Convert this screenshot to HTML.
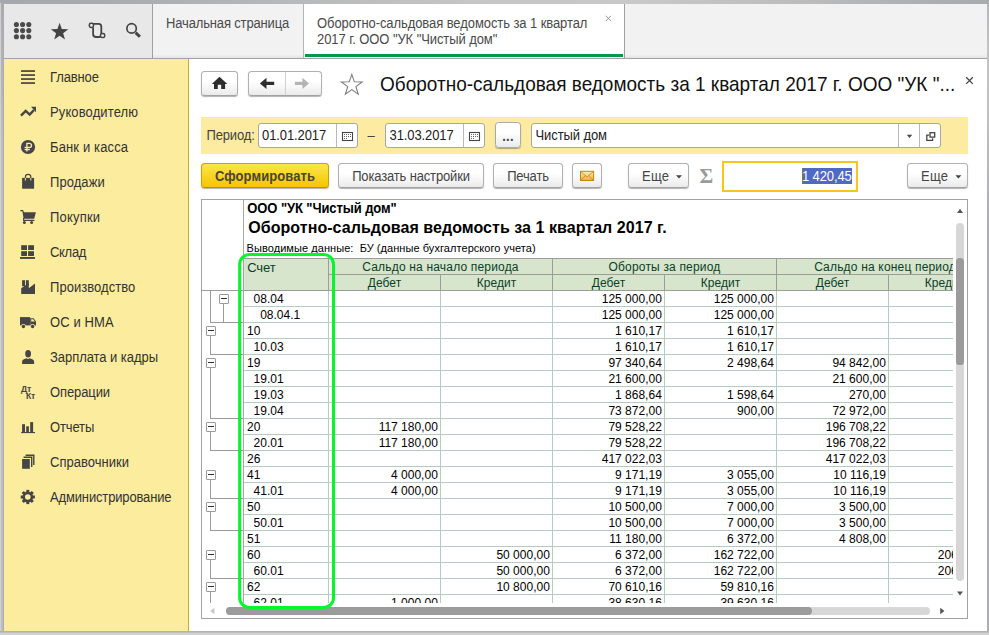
<!DOCTYPE html>
<html lang="ru">
<head>
<meta charset="utf-8">
<title>Оборотно-сальдовая ведомость</title>
<style>
*{box-sizing:border-box;margin:0;padding:0}
html,body{width:989px;height:635px;overflow:hidden}
body{position:relative;background:#a9abae;font-family:"Liberation Sans",sans-serif;font-size:13px;color:#333;letter-spacing:-0.15px}
.abs{position:absolute}
#frameT{left:0;top:0;width:989px;height:4px;background:linear-gradient(90deg,#a6a8ab 0,#a9abad 110px,#b8b9ba 300px,#c6c6c6 480px,#c8c8c8 640px,#bcbcbd 800px,#acaeb0 930px,#a9abad 989px)}
#frameL{left:0;top:3px;width:4px;height:632px;background:linear-gradient(90deg,#d0d0d0 0,#d0d0d0 1px,transparent 1px,transparent 3px,#ababb2 3px),linear-gradient(#a9abae 0,#b2b3b5 60px,#bebebe 140px)}
#frameR{left:987px;top:4px;width:2px;height:631px;background:linear-gradient(#b4b5b7 0,#c2c2c3 40px,#c0c0c1 110px,#abadaf 220px)}
#frameB{left:0;top:631px;width:989px;height:4px;background:linear-gradient(#b2b2b6 0,#b2b2b6 1px,#bebebe 1px,#bebebe 2px,#d0d0d0 2px)}
#win{left:4px;top:4px;width:983px;height:627px;background:#fff;overflow:hidden}
/* top bar */
#topbar{left:0;top:0;width:983px;height:54px;background:#f2f2f2}
#topline{left:0;top:54px;width:983px;height:1px;background:#a3a3a3}
#tools{left:0;top:0;width:148px;height:54px;background:#e8e8e8}
#toolsep{left:148px;top:0;width:1px;height:54px;background:#a0a0a0}
#tab1{left:149px;top:0;width:150px;height:54px;background:linear-gradient(#f2f2f2 0,#f2f2f2 50px,#e4e4e4 54px)}
#tab1sep{left:299px;top:0;width:1px;height:54px;background:#b4b4b4}
#tab2{left:300px;top:0;width:320px;height:54px;background:#fff}
#tab2sep{left:620px;top:0;width:1px;height:54px;background:#a0a0a0}
#tabrest{left:621px;top:0;width:362px;height:54px;background:linear-gradient(#f2f2f2 0,#f2f2f2 50px,#e4e4e4 54px)}
#tab2line{left:301px;top:50px;width:318px;height:3px;background:#039a45}
.tabtxt{color:#4a4a4a;white-space:pre;line-height:16px}
/* sidebar */
#side{left:0;top:55px;width:184px;height:572px;background:#fbec9e}
#sideb{left:184px;top:55px;width:1px;height:572px;background:#c9aa2a}
.nav{position:absolute;left:46px;white-space:pre;color:#333;line-height:16px;letter-spacing:-0.12px}
.ico{position:absolute}
/* main */
.btn{position:absolute;border:1px solid #b0b0b0;border-bottom-color:#a2a2a2;border-radius:3.5px;background:linear-gradient(#fff 0,#fff 40%,#ebebeb 100%);box-shadow:0 1px 1px rgba(0,0,0,.3);color:#444;white-space:pre;text-align:center}
.inp{position:absolute;border:1px solid #a4a7ad;border-radius:3px;background:#fff}
.ybtn{background:linear-gradient(#fde648,#f4c600);border-color:#c9a30a;border-bottom-color:#b8930a;color:#4a4632}
.lbl{white-space:pre;line-height:16px;color:#444}
.fld{white-space:pre;line-height:16px;color:#222;letter-spacing:-0.1px}
.ht{font-size:12px;line-height:16px;color:#0b3d2a;text-align:center;white-space:pre}
.ct{font-size:12px;line-height:16px;color:#000;white-space:pre;letter-spacing:0}
.bt{display:inline-block;line-height:16px;margin-top:4.6px;transform:scaleY(1.06);transform-origin:0 12.3px}
.nav,.tabtxt,.lbl,.fld{transform:scaleY(1.06);transform-origin:0 12.3px}
</style>
</head>
<body>
<div id="frameT" class="abs"></div>
<div id="frameL" class="abs"></div>
<div id="frameR" class="abs"></div>
<div id="frameB" class="abs"></div>
<div id="win" class="abs">
  <div id="topbar" class="abs"></div>
  <div id="tools" class="abs"></div>
  <div id="toolsep" class="abs"></div>
  <div id="tab1" class="abs"></div>
  <div id="tab1sep" class="abs"></div>
  <div id="tab2" class="abs"></div>
  <div id="tab2sep" class="abs"></div>
  <div id="tabrest" class="abs"></div>
  <div id="tab2line" class="abs"></div>
  <div id="topline" class="abs"></div>
  <div class="abs tabtxt" style="left:162px;top:12px">Начальная страница</div>
  <div class="abs tabtxt" style="left:313px;top:12px;letter-spacing:-0.08px">Оборотно-сальдовая ведомость за 1 квартал</div>
  <div class="abs tabtxt" style="left:313px;top:28px;letter-spacing:-0.08px">2017 г. ООО "УК "Чистый дом"</div>
  <svg class="abs" style="left:600px;top:10px" width="10" height="10" viewBox="0 0 10 10"><path d="M1.8 1.8 L7 7 M7 1.8 L1.8 7" stroke="#8a8a8a" stroke-width="0.9" fill="none"/></svg>

  <div id="side" class="abs"></div>
  <div id="sideb" class="abs"></div>
  <!--SIDENAV_START-->
  <svg class="abs" style="left:0;top:0" width="184" height="627" viewBox="4 4 184 627">
  <g fill="#4a4a4a">
  <circle cx="16.4" cy="24.5" r="2.55"/>
  <circle cx="22.6" cy="24.5" r="2.55"/>
  <circle cx="28.8" cy="24.5" r="2.55"/>
  <circle cx="16.4" cy="30.6" r="2.55"/>
  <circle cx="22.6" cy="30.6" r="2.55"/>
  <circle cx="28.8" cy="30.6" r="2.55"/>
  <circle cx="16.4" cy="36.7" r="2.55"/>
  <circle cx="22.6" cy="36.7" r="2.55"/>
  <circle cx="28.8" cy="36.7" r="2.55"/>
  </g>
  <polygon fill="#444" points="59.60,22.80 61.77,29.01 68.35,29.16 63.12,33.14 65.01,39.44 59.60,35.70 54.19,39.44 56.08,33.14 50.85,29.16 57.43,29.01"/>
  <path d="M92 23.8 H98.6 Q101.3 23.8 101.3 26.6 V33.4 M93.1 27.2 V34 Q93.1 37 96 37 H100.4" fill="none" stroke="#444" stroke-width="1.8"/>
  <rect x="89.3" y="23.3" width="4.2" height="4.2" rx="1.7" fill="#e8e8e8" stroke="#444" stroke-width="1.5"/>
  <rect x="100.5" y="33.4" width="4.2" height="4.2" rx="1.7" fill="#e8e8e8" stroke="#444" stroke-width="1.5"/>
  <circle cx="131.6" cy="28.4" r="4.7" fill="none" stroke="#444" stroke-width="1.7"/>
  <path d="M135.6 32.6 L139.9 36.8" stroke="#444" stroke-width="3" stroke-linecap="butt"/>
  <rect x="21" y="70.2" width="14" height="1.7" fill="#454545"/>
  <rect x="21" y="74.2" width="14" height="1.7" fill="#454545"/>
  <rect x="21" y="78.2" width="14" height="1.7" fill="#454545"/>
  <rect x="21" y="82.2" width="14" height="1.7" fill="#454545"/>
  <path d="M21 115.6 L25.7 110.9 L29.7 114.6 L34 110" fill="none" stroke="#454545" stroke-width="2.4" stroke-linejoin="miter"/>
  <path d="M31 106.8 H36 V112.2 Z" fill="#454545"/>
  <circle cx="28" cy="147" r="7.1" fill="#454545"/>
  <path d="M26.9 151.6 V143.4 H29.2 Q31.5 143.4 31.5 145.4 Q31.5 147.4 29.2 147.4 H24.6 M24.6 149.5 H29.8" fill="none" stroke="#fbec9e" stroke-width="1.35"/>
  <rect x="22.1" y="177.9" width="12" height="10.8" fill="#454545"/>
  <path d="M25.4 178 V177 Q25.4 174.4 28.1 174.4 Q30.8 174.4 30.8 177 V178" fill="none" stroke="#454545" stroke-width="1.2"/>
  <path d="M25.4 178 V180.4 M30.8 178 V180.4" fill="none" stroke="#e8d98f" stroke-width="1.1"/>
  <path d="M20.3 210.6 H22.6 L23.6 213" fill="none" stroke="#454545" stroke-width="1.2"/>
  <path d="M22.6 212.2 H35.9 L34.2 218.8 H23.6 Z" fill="#454545"/>
  <path d="M23.6 218 V220.4 H34.4" fill="none" stroke="#454545" stroke-width="1.1"/>
  <circle cx="24.4" cy="222.4" r="1.5" fill="#454545"/><circle cx="31.6" cy="222.4" r="1.5" fill="#454545"/>
  <rect x="21.2" y="245.2" width="5.8" height="4.8" fill="#454545"/><rect x="28.1" y="245.2" width="5.9" height="4.8" fill="#454545"/>
  <rect x="21.2" y="251.2" width="5.8" height="4.8" fill="#454545"/><rect x="28.1" y="251.2" width="5.9" height="4.8" fill="#454545"/>
  <rect x="20" y="257" width="15" height="1.9" fill="#454545"/>
  <rect x="22.1" y="280.2" width="2.9" height="6" fill="#454545"/><rect x="25.9" y="280.2" width="2.9" height="5" fill="#454545"/>
  <path d="M21.2 294 V288.2 L28.8 283 V288.2 L35 283.4 V294 Z" fill="#454545"/>
  <rect x="20" y="317.1" width="10.2" height="8.3" fill="#454545"/>
  <path d="M30.2 318.3 H33.6 L36 321.4 V325.4 H30.2 Z" fill="#454545"/>
  <path d="M31.2 319.3 H33.2 L34.9 321.6 H31.2 Z" fill="#fbec9e"/>
  <circle cx="23.4" cy="326.4" r="2.3" fill="#fbec9e"/><circle cx="32.6" cy="326.4" r="2.3" fill="#fbec9e"/>
  <circle cx="23.4" cy="326.5" r="1.7" fill="#454545"/><circle cx="32.6" cy="326.5" r="1.7" fill="#454545"/>
  <ellipse cx="28.1" cy="353.7" rx="2.9" ry="3.7" fill="#454545"/>
  <path d="M22.1 363.9 V361.4 Q22.1 359.6 24.4 359 L26.6 358.2 Q28.1 359.6 29.6 358.2 L31.8 359 Q34.1 359.6 34.1 361.4 V363.9 Z" fill="#454545"/>
  <rect x="22.1" y="424.2" width="2.9" height="8" fill="#454545"/><rect x="26.2" y="426.3" width="2.7" height="6" fill="#454545"/><rect x="30.2" y="422.1" width="2.9" height="10" fill="#454545"/>
  <rect x="21.2" y="432" width="13.8" height="1.1" fill="#454545"/>
  <rect x="22.1" y="459" width="7.7" height="9.8" fill="#454545"/>
  <path d="M23.6 457.2 H31.7 V467" fill="none" stroke="#454545" stroke-width="1.4"/>
  <path d="M25.6 455.3 H33.8 V465" fill="none" stroke="#454545" stroke-width="1.4"/>
  <rect x="26.30" y="489.90" width="3" height="3.2" transform="rotate(0 27.8 497.0)" fill="#454545"/><rect x="26.30" y="489.90" width="3" height="3.2" transform="rotate(45 27.8 497.0)" fill="#454545"/><rect x="26.30" y="489.90" width="3" height="3.2" transform="rotate(90 27.8 497.0)" fill="#454545"/><rect x="26.30" y="489.90" width="3" height="3.2" transform="rotate(135 27.8 497.0)" fill="#454545"/><rect x="26.30" y="489.90" width="3" height="3.2" transform="rotate(180 27.8 497.0)" fill="#454545"/><rect x="26.30" y="489.90" width="3" height="3.2" transform="rotate(225 27.8 497.0)" fill="#454545"/><rect x="26.30" y="489.90" width="3" height="3.2" transform="rotate(270 27.8 497.0)" fill="#454545"/><rect x="26.30" y="489.90" width="3" height="3.2" transform="rotate(315 27.8 497.0)" fill="#454545"/>
  <circle cx="27.8" cy="497.0" r="4.1" fill="none" stroke="#454545" stroke-width="2.6"/>
  </svg>
  <div class="nav" style="top:66px;letter-spacing:-0.13px">Главное</div>
  <div class="nav" style="top:101px;letter-spacing:0.12px">Руководителю</div>
  <div class="nav" style="top:136px;letter-spacing:0.14px">Банк и касса</div>
  <div class="nav" style="top:171px;letter-spacing:0.06px">Продажи</div>
  <div class="nav" style="top:206px;letter-spacing:0.2px">Покупки</div>
  <div class="nav" style="top:241px;letter-spacing:-0.3px">Склад</div>
  <div class="nav" style="top:276px;letter-spacing:0.05px">Производство</div>
  <div class="nav" style="top:311px;letter-spacing:0.11px">ОС и НМА</div>
  <div class="nav" style="top:346px;letter-spacing:-0.05px">Зарплата и кадры</div>
  <div class="nav" style="top:381px;letter-spacing:-0.11px">Операции</div>
  <div class="nav" style="top:416px;letter-spacing:-0.14px">Отчеты</div>
  <div class="nav" style="top:451px;letter-spacing:0.02px">Справочники</div>
  <div class="nav" style="top:486px;letter-spacing:-0.15px">Администрирование</div>
  <div class="abs" style="left:17px;top:380.5px;font-size:8.6px;line-height:8px;font-weight:bold;color:#454545;letter-spacing:-0.2px">Дт</div>
  <div class="abs" style="left:22px;top:388px;font-size:8.6px;line-height:8px;font-weight:bold;color:#454545;letter-spacing:-0.2px">Кт</div>
  <!--SIDENAV_END-->
  <!--MAIN_START-->
  <div class="btn" style="left:197px;top:67px;width:37px;height:25px;"></div>
  <div class="btn" style="left:244px;top:67px;width:74px;height:25px;"></div>
  <div class="abs" style="left:281px;top:68px;width:1px;height:23px;background:#d0d0d0"></div>
  <svg class="abs" style="left:185px;top:55px" width="798" height="140" viewBox="189 59 798 140">
  <path d="M219.5 76.7 L211.8 83.9 H214 V88.9 H217.8 V84.7 H221.2 V88.9 H225.1 V83.9 H227.3 Z" fill="#2d2d2d"/>
  <path d="M266.5 77.8 L259.9 83.4 L266.5 89 V85.1 H274.2 V81.8 H266.5 Z" fill="#2d2d2d"/>
  <path d="M302.4 77.8 L309 83.4 L302.4 89 V85.1 H294.9 V81.8 H302.4 Z" fill="#b4b4b4"/>
  <polygon fill="#fff" stroke="#7c7c7c" stroke-width="1.1" stroke-linejoin="miter" points="351.80,74.40 354.33,81.82 362.17,81.93 355.89,86.63 358.21,94.12 351.80,89.60 345.39,94.12 347.71,86.63 341.43,81.93 349.27,81.82"/>
  </svg>
  <div class="abs" style="left:376px;top:69px;font-size:19px;line-height:24px;color:#111;white-space:pre;letter-spacing:0;transform:scaleY(1.04);transform-origin:0 18.5px">Оборотно-сальдовая ведомость за 1 квартал 2017 г. ООО "УК "...</div>
  <svg class="abs" style="left:960px;top:71px" width="12" height="12" viewBox="964 75 12 12"><path d="M966.2 77.3 L972.8 83.9 M972.8 77.3 L966.2 83.9" stroke="#454545" stroke-width="1.3" fill="none"/></svg>
  <div class="abs" style="left:197px;top:113px;width:767px;height:37px;background:#fceba0"></div>
  <div class="abs lbl" style="left:202.5px;top:124px">Период:</div>
  <div class="inp" style="left:254px;top:119px;width:99.5px;height:25px;"></div>
  <div class="abs" style="left:332px;top:120px;width:1px;height:23px;background:#b6b8bd"></div>
  <div class="abs fld" style="left:258px;top:124px">01.01.2017</div>
  <div class="abs lbl" style="left:363.5px;top:124px">–</div>
  <div class="inp" style="left:381px;top:119px;width:100px;height:25px;"></div>
  <div class="abs" style="left:459px;top:120px;width:1px;height:23px;background:#b6b8bd"></div>
  <div class="abs fld" style="left:385.5px;top:124px">31.03.2017</div>
  <div class="btn" style="left:491px;top:118px;width:26px;height:26px;font-weight:bold;color:#444;padding-top:1px;letter-spacing:0.25px;border-color:#a9a9ae"><span class="bt">...</span></div>
  <div class="inp" style="left:527px;top:119px;width:409.5px;height:25px;"></div>
  <div class="abs" style="left:894px;top:120px;width:1px;height:23px;background:#b6b8bd"></div>
  <div class="abs" style="left:915px;top:120px;width:1px;height:23px;background:#b6b8bd"></div>
  <div class="abs fld" style="left:531.5px;top:124px">Чистый дом</div>
  <div class="btn ybtn" style="left:197px;top:159px;width:128px;height:25px;font-weight:bold;letter-spacing:0.08px"><span class="bt">Сформировать</span></div>
  <div class="btn" style="left:334px;top:159px;width:146px;height:25px;"><span class="bt">Показать настройки</span></div>
  <div class="btn" style="left:489px;top:159px;width:70px;height:25px;"><span class="bt">Печать</span></div>
  <div class="btn" style="left:568px;top:159px;width:30px;height:25px;"></div>
  <div class="btn" style="left:624px;top:159px;width:61px;height:25px;text-align:left;padding-left:13px;letter-spacing:0.25px"><span class="bt">Еще</span></div>
  <div class="btn" style="left:903px;top:159px;width:61px;height:25px;text-align:left;padding-left:13px;letter-spacing:0.25px"><span class="bt">Еще</span></div>
  <div class="abs" style="left:695.5px;top:160px;font-family:'Liberation Serif',serif;font-size:21px;line-height:24px;color:#9a9a9a;font-weight:bold;letter-spacing:0">Σ</div>
  <div class="abs" style="left:718px;top:157px;width:136px;height:31px;border:2px solid #f8c41f;background:#fff"></div>
  <div class="abs" style="left:798px;top:164px;width:50px;height:16px;background:#4f69c6"></div>
  <div class="abs" style="left:798px;top:164px;width:1px;height:16px;background:#8a7a30"></div>
  <div class="abs" style="left:798px;top:164.5px;width:49.4px;text-align:right;line-height:16px;color:#fff;white-space:pre;letter-spacing:-0.12px;transform:scaleY(1.06);transform-origin:0 12.3px">1 420,45</div>
  <svg class="abs" style="left:185px;top:55px" width="798" height="140" viewBox="189 59 798 140">
  <rect x="342.5" y="132.5" width="10" height="8" fill="#fff" stroke="#444" stroke-width="1.1"/><rect x="344.1" y="134.0" width="0.9" height="0.9" fill="#444"/><rect x="346.1" y="134.0" width="0.9" height="0.9" fill="#444"/><rect x="348.1" y="134.0" width="0.9" height="0.9" fill="#444"/><rect x="350.1" y="134.0" width="0.9" height="0.9" fill="#444"/><rect x="344.1" y="136.0" width="0.9" height="0.9" fill="#444"/><rect x="346.1" y="136.0" width="0.9" height="0.9" fill="#444"/><rect x="348.1" y="136.0" width="0.9" height="0.9" fill="#444"/><rect x="350.1" y="136.0" width="0.9" height="0.9" fill="#444"/><rect x="344.1" y="138.0" width="0.9" height="0.9" fill="#444"/><rect x="346.1" y="138.0" width="0.9" height="0.9" fill="#444"/>
  <rect x="469.5" y="132.5" width="10" height="8" fill="#fff" stroke="#444" stroke-width="1.1"/><rect x="471.1" y="134.0" width="0.9" height="0.9" fill="#444"/><rect x="473.1" y="134.0" width="0.9" height="0.9" fill="#444"/><rect x="475.1" y="134.0" width="0.9" height="0.9" fill="#444"/><rect x="477.1" y="134.0" width="0.9" height="0.9" fill="#444"/><rect x="471.1" y="136.0" width="0.9" height="0.9" fill="#444"/><rect x="473.1" y="136.0" width="0.9" height="0.9" fill="#444"/><rect x="475.1" y="136.0" width="0.9" height="0.9" fill="#444"/><rect x="477.1" y="136.0" width="0.9" height="0.9" fill="#444"/><rect x="471.1" y="138.0" width="0.9" height="0.9" fill="#444"/><rect x="473.1" y="138.0" width="0.9" height="0.9" fill="#444"/>
  <path d="M906.8 134.8 h5.4 l-2.7 3.2 z" fill="#444"/>
  <path d="M929 135.2 H926.8 V140.3 H932.6 V138.3" fill="none" stroke="#444" stroke-width="1.3"/><rect x="930" y="132.7" width="4.7" height="4.4" fill="#fff" stroke="#444" stroke-width="1.3"/>
  <path d="M676 175.2 h6 l-3 3.4 z" fill="#444"/>
  <path d="M955.4 175.2 h6 l-3 3.4 z" fill="#444"/>
  <defs><linearGradient id="mg" x1="0" y1="0" x2="0" y2="1"><stop offset="0" stop-color="#fdeeb5"/><stop offset="1" stop-color="#e9b040"/></linearGradient></defs>
  <rect x="580.5" y="171.3" width="13.1" height="9.2" fill="url(#mg)" stroke="#c6850f" stroke-width="1"/><path d="M581 171.8 L587 177 L593.1 171.8 M581 180 L585.4 175.6 M593.1 180 L588.7 175.6" fill="none" stroke="#c6850f" stroke-width="0.8"/>
  </svg>
  <!--REPORT_START-->
  <div id="rep" class="abs" style="left:197px;top:195px;width:767px;height:420px;border:1px solid #a2a2a2;background:#fff;overflow:hidden"></div>
  <div id="sheet" class="abs" style="left:198px;top:196px;width:750.5px;height:403px;overflow:hidden">
  <div class="abs" style="left:45.3px;top:0.6px;font-size:13px;font-weight:bold;line-height:16px;color:#000;white-space:pre;letter-spacing:-0.09px;transform:scaleY(1.07);transform-origin:0 12.3px">ООО "УК "Чистый дом"</div>
    <div class="abs" style="left:46.3px;top:18px;font-size:16px;font-weight:bold;line-height:20px;color:#000;white-space:pre;letter-spacing:0.05px">Оборотно-сальдовая ведомость за 1 квартал 2017 г.</div>
    <div class="abs" style="left:44.6px;top:41px;font-size:11px;line-height:14px;color:#000;white-space:pre;letter-spacing:0.06px">Выводимые данные:  БУ (данные бухгалтерского учета)</div>
    <div class="abs" style="left:42px;top:58px;width:757px;height:33px;background:#d6e5cb"></div>
    <div class="abs" style="left:0;top:58px;width:799px;height:1px;background:#9c9c9c;left:42px"></div>
    <div class="abs" style="left:126px;top:74px;width:672px;height:1px;background:#9c9c9c"></div>
    <div class="abs" style="left:0;top:90px;width:799px;height:1px;background:#9c9c9c"></div>
    <div class="abs" style="left:126px;top:58px;width:1px;height:33px;background:#9c9c9c"></div>
    <div class="abs" style="left:350px;top:58px;width:1px;height:33px;background:#9c9c9c"></div>
    <div class="abs" style="left:574px;top:58px;width:1px;height:33px;background:#9c9c9c"></div>
    <div class="abs" style="left:798px;top:58px;width:1px;height:33px;background:#9c9c9c"></div>
    <div class="abs" style="left:238px;top:74px;width:1px;height:17px;background:#9c9c9c"></div>
    <div class="abs" style="left:462px;top:74px;width:1px;height:17px;background:#9c9c9c"></div>
    <div class="abs" style="left:686px;top:74px;width:1px;height:17px;background:#9c9c9c"></div>
    <div class="abs" style="left:42px;top:106px;width:756px;height:1px;background:#b3cdc3"></div>
    <div class="abs" style="left:42px;top:122px;width:756px;height:1px;background:#b3cdc3"></div>
    <div class="abs" style="left:42px;top:138px;width:756px;height:1px;background:#b3cdc3"></div>
    <div class="abs" style="left:42px;top:154px;width:756px;height:1px;background:#b3cdc3"></div>
    <div class="abs" style="left:42px;top:170px;width:756px;height:1px;background:#b3cdc3"></div>
    <div class="abs" style="left:42px;top:186px;width:756px;height:1px;background:#b3cdc3"></div>
    <div class="abs" style="left:42px;top:202px;width:756px;height:1px;background:#b3cdc3"></div>
    <div class="abs" style="left:42px;top:218px;width:756px;height:1px;background:#b3cdc3"></div>
    <div class="abs" style="left:42px;top:234px;width:756px;height:1px;background:#b3cdc3"></div>
    <div class="abs" style="left:42px;top:250px;width:756px;height:1px;background:#b3cdc3"></div>
    <div class="abs" style="left:42px;top:266px;width:756px;height:1px;background:#b3cdc3"></div>
    <div class="abs" style="left:42px;top:282px;width:756px;height:1px;background:#b3cdc3"></div>
    <div class="abs" style="left:42px;top:298px;width:756px;height:1px;background:#b3cdc3"></div>
    <div class="abs" style="left:42px;top:314px;width:756px;height:1px;background:#b3cdc3"></div>
    <div class="abs" style="left:42px;top:330px;width:756px;height:1px;background:#b3cdc3"></div>
    <div class="abs" style="left:42px;top:346px;width:756px;height:1px;background:#b3cdc3"></div>
    <div class="abs" style="left:42px;top:362px;width:756px;height:1px;background:#b3cdc3"></div>
    <div class="abs" style="left:42px;top:378px;width:756px;height:1px;background:#b3cdc3"></div>
    <div class="abs" style="left:42px;top:394px;width:756px;height:1px;background:#b3cdc3"></div>
    <div class="abs" style="left:42px;top:410px;width:756px;height:1px;background:#b3cdc3"></div>
    <div class="abs" style="left:126px;top:91px;width:1px;height:320px;background:#b3cdc3"></div>
    <div class="abs" style="left:238px;top:91px;width:1px;height:320px;background:#b3cdc3"></div>
    <div class="abs" style="left:350px;top:91px;width:1px;height:320px;background:#b3cdc3"></div>
    <div class="abs" style="left:462px;top:91px;width:1px;height:320px;background:#b3cdc3"></div>
    <div class="abs" style="left:574px;top:91px;width:1px;height:320px;background:#b3cdc3"></div>
    <div class="abs" style="left:686px;top:91px;width:1px;height:320px;background:#b3cdc3"></div>
    <div class="abs" style="left:798px;top:91px;width:1px;height:320px;background:#b3cdc3"></div>
    <div class="abs ht" style="left:45.2px;top:59.6px;text-align:left;letter-spacing:-0.1px;font-size:13px;transform:scaleY(1.04);transform-origin:0 12.3px">Счет</div>
    <div class="abs ht" style="left:127px;top:59px;width:223px;letter-spacing:0.18px">Сальдо на начало периода</div>
    <div class="abs ht" style="left:351px;top:59px;width:223px;letter-spacing:0.18px">Обороты за период</div>
    <div class="abs ht" style="left:575px;top:59px;width:223px;letter-spacing:0.18px">Сальдо на конец периода</div>
    <div class="abs ht" style="left:127px;top:75px;width:111px;letter-spacing:0.05px">Дебет</div>
    <div class="abs ht" style="left:239px;top:75px;width:111px;letter-spacing:0.05px">Кредит</div>
    <div class="abs ht" style="left:351px;top:75px;width:111px;letter-spacing:0.05px">Дебет</div>
    <div class="abs ht" style="left:463px;top:75px;width:111px;letter-spacing:0.05px">Кредит</div>
    <div class="abs ht" style="left:575px;top:75px;width:111px;letter-spacing:0.05px">Дебет</div>
    <div class="abs ht" style="left:687px;top:75px;width:111px;letter-spacing:0.05px">Кредит</div>
    <div class="abs ct" style="left:51.6px;top:91px">08.04</div>
    <div class="abs ct" style="right:290.7px;top:91px">125 000,00</div>
    <div class="abs ct" style="right:178.7px;top:91px">125 000,00</div>
    <div class="abs ct" style="left:58.2px;top:107px">08.04.1</div>
    <div class="abs ct" style="right:290.7px;top:107px">125 000,00</div>
    <div class="abs ct" style="right:178.7px;top:107px">125 000,00</div>
    <div class="abs ct" style="left:45px;top:123px">10</div>
    <div class="abs ct" style="right:290.7px;top:123px">1 610,17</div>
    <div class="abs ct" style="right:178.7px;top:123px">1 610,17</div>
    <div class="abs ct" style="left:51.6px;top:139px">10.03</div>
    <div class="abs ct" style="right:290.7px;top:139px">1 610,17</div>
    <div class="abs ct" style="right:178.7px;top:139px">1 610,17</div>
    <div class="abs ct" style="left:45px;top:155px">19</div>
    <div class="abs ct" style="right:290.7px;top:155px">97 340,64</div>
    <div class="abs ct" style="right:178.7px;top:155px">2 498,64</div>
    <div class="abs ct" style="right:66.7px;top:155px">94 842,00</div>
    <div class="abs ct" style="left:51.6px;top:171px">19.01</div>
    <div class="abs ct" style="right:290.7px;top:171px">21 600,00</div>
    <div class="abs ct" style="right:66.7px;top:171px">21 600,00</div>
    <div class="abs ct" style="left:51.6px;top:187px">19.03</div>
    <div class="abs ct" style="right:290.7px;top:187px">1 868,64</div>
    <div class="abs ct" style="right:178.7px;top:187px">1 598,64</div>
    <div class="abs ct" style="right:66.7px;top:187px">270,00</div>
    <div class="abs ct" style="left:51.6px;top:203px">19.04</div>
    <div class="abs ct" style="right:290.7px;top:203px">73 872,00</div>
    <div class="abs ct" style="right:178.7px;top:203px">900,00</div>
    <div class="abs ct" style="right:66.7px;top:203px">72 972,00</div>
    <div class="abs ct" style="left:45px;top:219px">20</div>
    <div class="abs ct" style="right:514.7px;top:219px">117 180,00</div>
    <div class="abs ct" style="right:290.7px;top:219px">79 528,22</div>
    <div class="abs ct" style="right:66.7px;top:219px">196 708,22</div>
    <div class="abs ct" style="left:51.6px;top:235px">20.01</div>
    <div class="abs ct" style="right:514.7px;top:235px">117 180,00</div>
    <div class="abs ct" style="right:290.7px;top:235px">79 528,22</div>
    <div class="abs ct" style="right:66.7px;top:235px">196 708,22</div>
    <div class="abs ct" style="left:45px;top:251px">26</div>
    <div class="abs ct" style="right:290.7px;top:251px">417 022,03</div>
    <div class="abs ct" style="right:66.7px;top:251px">417 022,03</div>
    <div class="abs ct" style="left:45px;top:267px">41</div>
    <div class="abs ct" style="right:514.7px;top:267px">4 000,00</div>
    <div class="abs ct" style="right:290.7px;top:267px">9 171,19</div>
    <div class="abs ct" style="right:178.7px;top:267px">3 055,00</div>
    <div class="abs ct" style="right:66.7px;top:267px">10 116,19</div>
    <div class="abs ct" style="left:51.6px;top:283px">41.01</div>
    <div class="abs ct" style="right:514.7px;top:283px">4 000,00</div>
    <div class="abs ct" style="right:290.7px;top:283px">9 171,19</div>
    <div class="abs ct" style="right:178.7px;top:283px">3 055,00</div>
    <div class="abs ct" style="right:66.7px;top:283px">10 116,19</div>
    <div class="abs ct" style="left:45px;top:299px">50</div>
    <div class="abs ct" style="right:290.7px;top:299px">10 500,00</div>
    <div class="abs ct" style="right:178.7px;top:299px">7 000,00</div>
    <div class="abs ct" style="right:66.7px;top:299px">3 500,00</div>
    <div class="abs ct" style="left:51.6px;top:315px">50.01</div>
    <div class="abs ct" style="right:290.7px;top:315px">10 500,00</div>
    <div class="abs ct" style="right:178.7px;top:315px">7 000,00</div>
    <div class="abs ct" style="right:66.7px;top:315px">3 500,00</div>
    <div class="abs ct" style="left:45px;top:331px">51</div>
    <div class="abs ct" style="right:290.7px;top:331px">11 180,00</div>
    <div class="abs ct" style="right:178.7px;top:331px">6 372,00</div>
    <div class="abs ct" style="right:66.7px;top:331px">4 808,00</div>
    <div class="abs ct" style="left:45px;top:347px">60</div>
    <div class="abs ct" style="right:402.7px;top:347px">50 000,00</div>
    <div class="abs ct" style="right:290.7px;top:347px">6 372,00</div>
    <div class="abs ct" style="right:178.7px;top:347px">162 722,00</div>
    <div class="abs ct" style="right:-45.3px;top:347px">206 350,00</div>
    <div class="abs ct" style="left:51.6px;top:363px">60.01</div>
    <div class="abs ct" style="right:402.7px;top:363px">50 000,00</div>
    <div class="abs ct" style="right:290.7px;top:363px">6 372,00</div>
    <div class="abs ct" style="right:178.7px;top:363px">162 722,00</div>
    <div class="abs ct" style="right:-45.3px;top:363px">206 350,00</div>
    <div class="abs ct" style="left:45px;top:379px">62</div>
    <div class="abs ct" style="right:402.7px;top:379px">10 800,00</div>
    <div class="abs ct" style="right:290.7px;top:379px">70 610,16</div>
    <div class="abs ct" style="right:178.7px;top:379px">59 810,16</div>
    <div class="abs ct" style="left:51.6px;top:395px">62.01</div>
    <div class="abs ct" style="right:514.7px;top:395px">1 000,00</div>
    <div class="abs ct" style="right:290.7px;top:395px">38 630,16</div>
    <div class="abs ct" style="right:178.7px;top:395px">39 630,16</div>
  </div>
  <div class="abs" style="left:239px;top:196px;width:1px;height:403px;background:#a8a8a8"></div>
  <div class="abs" style="left:198px;top:286px;width:42px;height:1px;background:#9c9c9c"></div>
  <div class="abs" style="left:206px;top:287px;width:1px;height:31px;background:#9a9a9a"></div>
  <div class="abs" style="left:214.5px;top:289.5px;width:10px;height:10px;border:1px solid #9a9a9a;background:#fff;border-radius:1px"><div class="abs" style="left:1px;top:3.5px;width:6px;height:1px;background:#333"></div></div>
  <div class="abs" style="left:219px;top:299px;width:1px;height:19px;background:#9a9a9a"></div>
  <div class="abs" style="left:206px;top:318px;width:33px;height:1px;background:#9a9a9a"></div>
  <div class="abs" style="left:201.5px;top:321.5px;width:10px;height:10px;border:1px solid #9a9a9a;background:#fff;border-radius:1px"><div class="abs" style="left:1px;top:3.5px;width:6px;height:1px;background:#333"></div></div>
  <div class="abs" style="left:206px;top:331px;width:1px;height:19px;background:#9a9a9a"></div>
  <div class="abs" style="left:206px;top:350px;width:33px;height:1px;background:#9a9a9a"></div>
  <div class="abs" style="left:201.5px;top:353.5px;width:10px;height:10px;border:1px solid #9a9a9a;background:#fff;border-radius:1px"><div class="abs" style="left:1px;top:3.5px;width:6px;height:1px;background:#333"></div></div>
  <div class="abs" style="left:206px;top:363px;width:1px;height:51px;background:#9a9a9a"></div>
  <div class="abs" style="left:206px;top:414px;width:33px;height:1px;background:#9a9a9a"></div>
  <div class="abs" style="left:201.5px;top:417.5px;width:10px;height:10px;border:1px solid #9a9a9a;background:#fff;border-radius:1px"><div class="abs" style="left:1px;top:3.5px;width:6px;height:1px;background:#333"></div></div>
  <div class="abs" style="left:206px;top:427px;width:1px;height:19px;background:#9a9a9a"></div>
  <div class="abs" style="left:206px;top:446px;width:33px;height:1px;background:#9a9a9a"></div>
  <div class="abs" style="left:201.5px;top:465.5px;width:10px;height:10px;border:1px solid #9a9a9a;background:#fff;border-radius:1px"><div class="abs" style="left:1px;top:3.5px;width:6px;height:1px;background:#333"></div></div>
  <div class="abs" style="left:206px;top:475px;width:1px;height:19px;background:#9a9a9a"></div>
  <div class="abs" style="left:206px;top:494px;width:33px;height:1px;background:#9a9a9a"></div>
  <div class="abs" style="left:201.5px;top:497.5px;width:10px;height:10px;border:1px solid #9a9a9a;background:#fff;border-radius:1px"><div class="abs" style="left:1px;top:3.5px;width:6px;height:1px;background:#333"></div></div>
  <div class="abs" style="left:206px;top:507px;width:1px;height:19px;background:#9a9a9a"></div>
  <div class="abs" style="left:206px;top:526px;width:33px;height:1px;background:#9a9a9a"></div>
  <div class="abs" style="left:201.5px;top:545.5px;width:10px;height:10px;border:1px solid #9a9a9a;background:#fff;border-radius:1px"><div class="abs" style="left:1px;top:3.5px;width:6px;height:1px;background:#333"></div></div>
  <div class="abs" style="left:206px;top:555px;width:1px;height:19px;background:#9a9a9a"></div>
  <div class="abs" style="left:206px;top:574px;width:33px;height:1px;background:#9a9a9a"></div>
  <div class="abs" style="left:201.5px;top:577.5px;width:10px;height:10px;border:1px solid #9a9a9a;background:#fff;border-radius:1px"><div class="abs" style="left:1px;top:3.5px;width:6px;height:1px;background:#333"></div></div>
  <div class="abs" style="left:206px;top:587px;width:1px;height:12px;background:#9a9a9a"></div>
  <div class="abs" style="left:952px;top:218.6px;width:8px;height:358px;border-radius:4px;background:#d7d7d7"></div>
  <div class="abs" style="left:952.4px;top:253.5px;width:7.2px;height:107px;border-radius:3.6px;background:#9b9b9b"></div>
  <div class="abs" style="left:221.5px;top:602.8px;width:704.5px;height:8.2px;border-radius:4.1px;background:#d7d7d7"></div>
  <div class="abs" style="left:221.5px;top:603px;width:586px;height:7.8px;border-radius:3.9px;background:#9b9b9b"></div>
  <svg class="abs" style="left:198px;top:196px" width="766" height="418" viewBox="202 200 766 418"><path d="M957 213 h6 l-3 -4.2 z" fill="#555"/><path d="M957 591.4 h6 l-3 4.2 z" fill="#555"/><path d="M940.2 607.8 v6.4 l4.2 -3.2 z" fill="#555"/><path d="M214.4 607.8 v6.4 l-4.2 -3.2 z" fill="#c8c8c8"/><rect x="239.65" y="254.55" width="93.85" height="352.95" rx="9.8" ry="9.8" fill="none" stroke="#04f72c" stroke-width="3"/></svg>
  <!--REPORT_END-->
  <!--MAIN_END-->
</div>
</body>
</html>
